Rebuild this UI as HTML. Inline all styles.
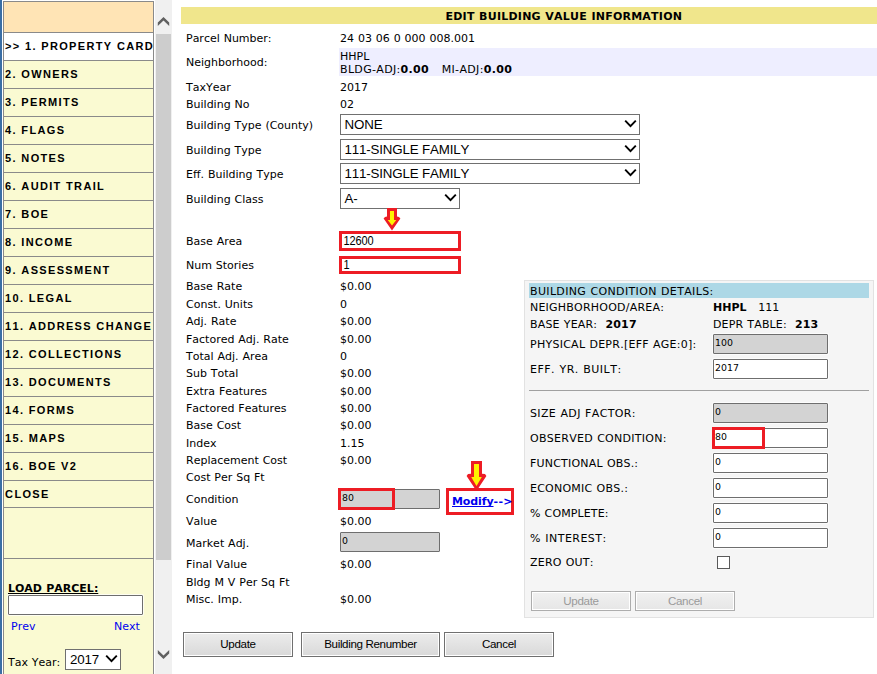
<!DOCTYPE html>
<html><head><meta charset="utf-8"><title>Edit Building Value Information</title>
<style>
html,body{margin:0;padding:0;background:#fff;}
body{font-kerning:none;text-decoration-skip-ink:none;width:877px;height:674px;position:relative;overflow:hidden;font-family:"DejaVu Sans","Liberation Sans",sans-serif;font-size:11px;color:#000;}
.a{position:absolute;white-space:nowrap;}
.v{font-family:"DejaVu Sans","Liberation Sans",sans-serif;font-size:11px;letter-spacing:0px;word-spacing:0.4px;line-height:14px;margin-top:1px;}
.ar{font-family:"Liberation Sans",sans-serif;}
.nav{position:absolute;left:3px;width:149px;height:27px;border:1px solid #8a8a8a;border-top:none;background:#fafad2;font-family:"Liberation Sans",sans-serif;font-weight:bold;font-size:11px;letter-spacing:1.34px;line-height:27px;white-space:nowrap;overflow:hidden;box-sizing:content-box;}
.nav span{padding-left:1.1px;}
.sel{position:absolute;box-sizing:border-box;border:1px solid #707070;background:#fff;font-family:"Liberation Sans",sans-serif;font-size:13.33px;line-height:19px;padding-left:3.5px;color:#000;letter-spacing:-0.15px;}
.inp{position:absolute;box-sizing:border-box;border:1px solid #6e6e6e;border-radius:1px;box-shadow:0 0 0 1px rgba(255,255,255,.7);background:#fff;font-family:"DejaVu Sans",sans-serif;font-size:9.4px;letter-spacing:0px;line-height:12px;padding:2px 0 0 1px;}
.gray{background:#d3d3d3;border-color:#6e6e6e;}
.red{position:absolute;box-sizing:border-box;border:3px solid #ed1c24;}
.btn{position:absolute;box-sizing:border-box;border:1px solid #707070;box-shadow:inset 0 0 0 1px #fff;background:linear-gradient(#ececec,#d9d9d9);font-family:"Liberation Sans",sans-serif;font-size:11.6px;letter-spacing:-0.35px;text-align:center;line-height:21px;color:#000;}
.btn.dis{border-color:#adadad;background:linear-gradient(#f1f1f1,#e6e6e6);color:#9a9a9a;}
</style></head><body>

<div class="a" style="left:0;top:0;width:2px;height:674px;background:#3a6ea5;"></div>
<div class="a" style="left:3px;top:1px;width:149px;height:673px;background:#fafad2;border-left:1px solid #8a8a8a;border-right:1px solid #8a8a8a;"></div>
<div class="nav" style="top:1px;height:30px;background:#ffe4b5;border-top:1px solid #8a8a8a;"></div>
<div class="nav" style="top:33px;background:#fff;"><span>&gt;&gt; 1. PROPERTY CARD</span></div>
<div class="nav" style="top:61px;"><span>2. OWNERS</span></div>
<div class="nav" style="top:89px;"><span>3. PERMITS</span></div>
<div class="nav" style="top:117px;"><span>4. FLAGS</span></div>
<div class="nav" style="top:145px;"><span>5. NOTES</span></div>
<div class="nav" style="top:173px;"><span>6. AUDIT TRAIL</span></div>
<div class="nav" style="top:201px;"><span>7. BOE</span></div>
<div class="nav" style="top:229px;"><span>8. INCOME</span></div>
<div class="nav" style="top:257px;"><span>9. ASSESSMENT</span></div>
<div class="nav" style="top:285px;"><span>10. LEGAL</span></div>
<div class="nav" style="top:313px;"><span>11. ADDRESS CHANGE</span></div>
<div class="nav" style="top:341px;"><span>12. COLLECTIONS</span></div>
<div class="nav" style="top:369px;"><span>13. DOCUMENTS</span></div>
<div class="nav" style="top:397px;"><span>14. FORMS</span></div>
<div class="nav" style="top:425px;"><span>15. MAPS</span></div>
<div class="nav" style="top:453px;"><span>16. BOE V2</span></div>
<div class="nav" style="top:481px;height:26px;line-height:26px;"><span>CLOSE</span></div>
<div class="nav" style="top:508px;height:50px;"></div>
<div class="a v" style="left:8px;top:581px;font-weight:bold;text-decoration:underline;letter-spacing:0px;">LOAD PARCEL:</div>
<div class="inp" style="left:8px;top:595px;width:135px;height:20px;"></div>
<div class="a v" style="left:11px;top:619px;color:#0000ee;">Prev</div>
<div class="a v" style="left:114px;top:619px;color:#0000ee;">Next</div>
<div class="a v" style="left:8px;top:655px;">Tax Year:</div>
<div class="sel" style="left:65px;top:649px;width:56px;height:21px;padding-left:4px;">2017<svg class="a" style="right:2px;top:4px" width="13" height="10" viewBox="0 0 13 10"><path d="M1.2 1.6 L6.5 7.2 L11.8 1.6" fill="none" stroke="#000" stroke-width="1.9"/></svg></div>
<div class="a" style="left:155px;top:0;width:17px;height:674px;background:#f0f0f0;"></div>
<div class="a" style="left:156px;top:34px;width:15px;height:526px;background:#cdcdcd;"></div>
<svg class="a" style="left:155px;top:0" width="17" height="674" viewBox="155 0 17 674"><polygon points="163.5,16.9 169.2,22.4 169.2,26.1 163.5,20.6 157.8,26.1 157.8,22.4" fill="#606060"/><polygon points="157.8,649.9 163.5,655.4 169.2,649.9 169.2,653.6 163.5,659.1 157.8,653.6" fill="#606060"/></svg>
<div class="a" style="left:181px;top:7px;width:696px;height:17px;background:#f0e68c;"></div>
<div class="a v" id="title" style="left:445.5px;top:9px;font-weight:bold;letter-spacing:0.23px;">EDIT BUILDING VALUE INFORMATION</div>
<div class="a" style="left:339px;top:48px;width:538px;height:28px;background:#eeeeff;"></div>
<div class="a v" style="left:186px;top:31px;">Parcel Number:</div>
<div class="a v" style="left:186px;top:55px;">Neighborhood:</div>
<div class="a v" style="left:186px;top:80px;">TaxYear</div>
<div class="a v" style="left:186px;top:97px;">Building No</div>
<div class="a v" style="left:186px;top:118px;">Building Type (County)</div>
<div class="a v" style="left:186px;top:143px;">Building Type</div>
<div class="a v" style="left:186px;top:167px;">Eff. Building Type</div>
<div class="a v" style="left:186px;top:192px;">Building Class</div>
<div class="a v" style="left:186px;top:234px;">Base Area</div>
<div class="a v" style="left:186px;top:258px;">Num Stories</div>
<div class="a v" style="left:186px;top:279px;">Base Rate</div>
<div class="a v" style="left:186px;top:297px;">Const. Units</div>
<div class="a v" style="left:186px;top:314px;">Adj. Rate</div>
<div class="a v" style="left:186px;top:332px;">Factored Adj. Rate</div>
<div class="a v" style="left:186px;top:349px;">Total Adj. Area</div>
<div class="a v" style="left:186px;top:366px;">Sub Total</div>
<div class="a v" style="left:186px;top:384px;">Extra Features</div>
<div class="a v" style="left:186px;top:401px;">Factored Features</div>
<div class="a v" style="left:186px;top:418px;">Base Cost</div>
<div class="a v" style="left:186px;top:436px;">Index</div>
<div class="a v" style="left:186px;top:453px;">Replacement Cost</div>
<div class="a v" style="left:186px;top:470px;">Cost Per Sq Ft</div>
<div class="a v" style="left:186px;top:492px;">Condition</div>
<div class="a v" style="left:186px;top:514px;">Value</div>
<div class="a v" style="left:186px;top:536px;">Market Adj.</div>
<div class="a v" style="left:186px;top:557px;">Final Value</div>
<div class="a v" style="left:186px;top:575px;">Bldg M V Per Sq Ft</div>
<div class="a v" style="left:186px;top:592px;">Misc. Imp.</div>
<div class="a v" style="left:340px;top:31px;">24 03 06 0 000 008.001</div>
<div class="a v" style="left:340px;top:80px;">2017</div>
<div class="a v" style="left:340px;top:97px;">02</div>
<div class="a v" style="left:340px;top:279px;">$0.00</div>
<div class="a v" style="left:340px;top:297px;">0</div>
<div class="a v" style="left:340px;top:314px;">$0.00</div>
<div class="a v" style="left:340px;top:332px;">$0.00</div>
<div class="a v" style="left:340px;top:349px;">0</div>
<div class="a v" style="left:340px;top:366px;">$0.00</div>
<div class="a v" style="left:340px;top:384px;">$0.00</div>
<div class="a v" style="left:340px;top:401px;">$0.00</div>
<div class="a v" style="left:340px;top:418px;">$0.00</div>
<div class="a v" style="left:340px;top:436px;">1.15</div>
<div class="a v" style="left:340px;top:453px;">$0.00</div>
<div class="a v" style="left:340px;top:514px;">$0.00</div>
<div class="a v" style="left:340px;top:557px;">$0.00</div>
<div class="a v" style="left:340px;top:592px;">$0.00</div>
<div class="a v" style="left:340px;top:48.5px;line-height:13px;">HHPL<br><span style="letter-spacing:0.33px">BLDG-ADJ:<b>0.00</b>&nbsp;&nbsp; MI-ADJ:<b>0.00</b></span></div>
<div class="sel" style="left:340px;top:114px;width:300px;height:21px;">NONE<svg class="a" style="right:2px;top:4px" width="13" height="10" viewBox="0 0 13 10"><path d="M1.2 1.6 L6.5 7.2 L11.8 1.6" fill="none" stroke="#000" stroke-width="1.9"/></svg></div>
<div class="sel" style="left:340px;top:139px;width:300px;height:21px;">111-SINGLE FAMILY<svg class="a" style="right:2px;top:4px" width="13" height="10" viewBox="0 0 13 10"><path d="M1.2 1.6 L6.5 7.2 L11.8 1.6" fill="none" stroke="#000" stroke-width="1.9"/></svg></div>
<div class="sel" style="left:340px;top:163px;width:300px;height:21px;">111-SINGLE FAMILY<svg class="a" style="right:2px;top:4px" width="13" height="10" viewBox="0 0 13 10"><path d="M1.2 1.6 L6.5 7.2 L11.8 1.6" fill="none" stroke="#000" stroke-width="1.9"/></svg></div>
<div class="sel" style="left:340px;top:188px;width:120px;height:21px;">A-<svg class="a" style="right:2px;top:4px" width="13" height="10" viewBox="0 0 13 10"><path d="M1.2 1.6 L6.5 7.2 L11.8 1.6" fill="none" stroke="#000" stroke-width="1.9"/></svg></div>
<svg class="a" style="left:380px;top:205px" width="24" height="28" viewBox="380 205 24 28"><polygon points="387,208 397,208 397,216.6 399,217 400.4,218.6 392,230.4 383.6,218.6 385,217 387,216.6" fill="#ed1c24"/><polygon points="390,211 394,211 394,220 396.3,220 392,225.4 387.7,220 390,220" fill="#fff200"/></svg>
<svg class="a" style="left:462px;top:458px" width="30" height="36" viewBox="462 458 30 36"><polygon points="471,461 482,461 482,473.8 485,474 486.4,476 476.5,491 466.6,476 468,474 471,473.8" fill="#ed1c24"/><polygon points="474,464 479,464 479,477 481.8,477 476.5,486 471.2,477 474,477" fill="#fff200"/></svg>
<div class="a" style="left:339px;top:231px;width:122px;height:20px;box-sizing:border-box;border:3px solid #ed1c24;background:#fff;"><div class="a" style="left:1.5px;top:0px;font-family:'Liberation Sans',sans-serif;font-size:11px;letter-spacing:-0.1px;line-height:14px;transform:scaleY(1.12);transform-origin:0 11px;">12600</div></div>
<div class="a" style="left:339px;top:256px;width:122px;height:18px;box-sizing:border-box;border:3px solid #ed1c24;background:#fff;"><div class="a" style="left:1.5px;top:-1px;font-family:'Liberation Sans',sans-serif;font-size:11px;letter-spacing:-0.1px;line-height:14px;transform:scaleY(1.12);transform-origin:0 11px;">1</div></div>
<div class="inp gray" style="left:340px;top:489px;width:100px;height:20px;">80</div>
<div class="red" style="left:338px;top:488px;width:57px;height:22px;"></div>
<div class="inp gray" style="left:340px;top:532px;width:100px;height:20px;">0</div>
<div class="red" style="left:446px;top:488px;width:68px;height:27px;"></div>
<div class="a v" style="left:452px;top:494px;font-weight:bold;color:#0000ee;letter-spacing:-0.1px;"><u>Modify</u><span style="letter-spacing:0.3px">--&gt;</span></div>
<div class="btn" style="left:183px;top:632px;width:110px;height:25px;">Update</div>
<div class="btn" style="left:301px;top:632px;width:139px;height:25px;">Building Renumber</div>
<div class="btn" style="left:444px;top:632px;width:110px;height:25px;">Cancel</div>
<div class="a" style="left:524px;top:280px;width:350px;height:338px;background:#f5f5f5;border:1px solid #e2e2e2;box-sizing:border-box;"></div>
<div class="a" style="left:529px;top:283px;width:340px;height:15px;background:#add8e6;"></div>
<div class="a v" style="left:530px;top:284px;letter-spacing:0.35px;">BUILDING CONDITION DETAILS:</div>
<div class="a v" style="left:530px;top:300px;letter-spacing:0.22px;">NEIGHBORHOOD/AREA:</div>
<div class="a v" style="left:530px;top:317px;letter-spacing:0.18px;">BASE YEAR:&nbsp; <b>2017</b></div>
<div class="a v" style="left:530px;top:337px;letter-spacing:0.26px;">PHYSICAL DEPR.[EFF AGE:0]:</div>
<div class="a v" style="left:530px;top:362px;letter-spacing:0.5px;">EFF. YR. BUILT:</div>
<div class="a v" style="left:530px;top:406px;letter-spacing:0.37px;">SIZE ADJ FACTOR:</div>
<div class="a v" style="left:530px;top:431px;letter-spacing:0.28px;">OBSERVED CONDITION:</div>
<div class="a v" style="left:530px;top:456px;letter-spacing:0.2px;">FUNCTIONAL OBS.:</div>
<div class="a v" style="left:530px;top:481px;letter-spacing:0.23px;">ECONOMIC OBS.:</div>
<div class="a v" style="left:530px;top:506px;letter-spacing:0.12px;">% COMPLETE:</div>
<div class="a v" style="left:530px;top:531px;letter-spacing:0.47px;">% INTEREST:</div>
<div class="a v" style="left:530px;top:555px;letter-spacing:0.2px;">ZERO OUT:</div>
<div class="a v" style="left:713px;top:300px;"><b>HHPL</b>&nbsp;&nbsp; 111</div>
<div class="a v" style="left:713px;top:317px;letter-spacing:0.15px;">DEPR TABLE:&nbsp; <b>213</b></div>
<div class="inp gray" style="left:713px;top:334px;width:115px;height:20px;">100</div>
<div class="inp" style="left:713px;top:359px;width:115px;height:20px;">2017</div>
<div class="inp gray" style="left:713px;top:403px;width:115px;height:20px;">0</div>
<div class="inp" style="left:713px;top:428px;width:115px;height:20px;">80</div>
<div class="inp" style="left:713px;top:453px;width:115px;height:20px;">0</div>
<div class="inp" style="left:713px;top:478px;width:115px;height:20px;">0</div>
<div class="inp" style="left:713px;top:503px;width:115px;height:20px;">0</div>
<div class="inp" style="left:713px;top:528px;width:115px;height:20px;">0</div>
<div class="red" style="left:712px;top:427px;width:53px;height:22px;"></div>
<div class="a" style="left:529px;top:390px;width:340px;height:1px;background:#a0a0a0;"></div>
<div class="a" style="left:717px;top:556px;width:13px;height:13px;box-sizing:border-box;border:1px solid #5a5a5a;background:#fff;"></div>
<div class="btn dis" style="left:531px;top:591px;width:100px;height:20px;line-height:18px;">Update</div>
<div class="btn dis" style="left:635px;top:591px;width:100px;height:20px;line-height:18px;">Cancel</div>
</body></html>
